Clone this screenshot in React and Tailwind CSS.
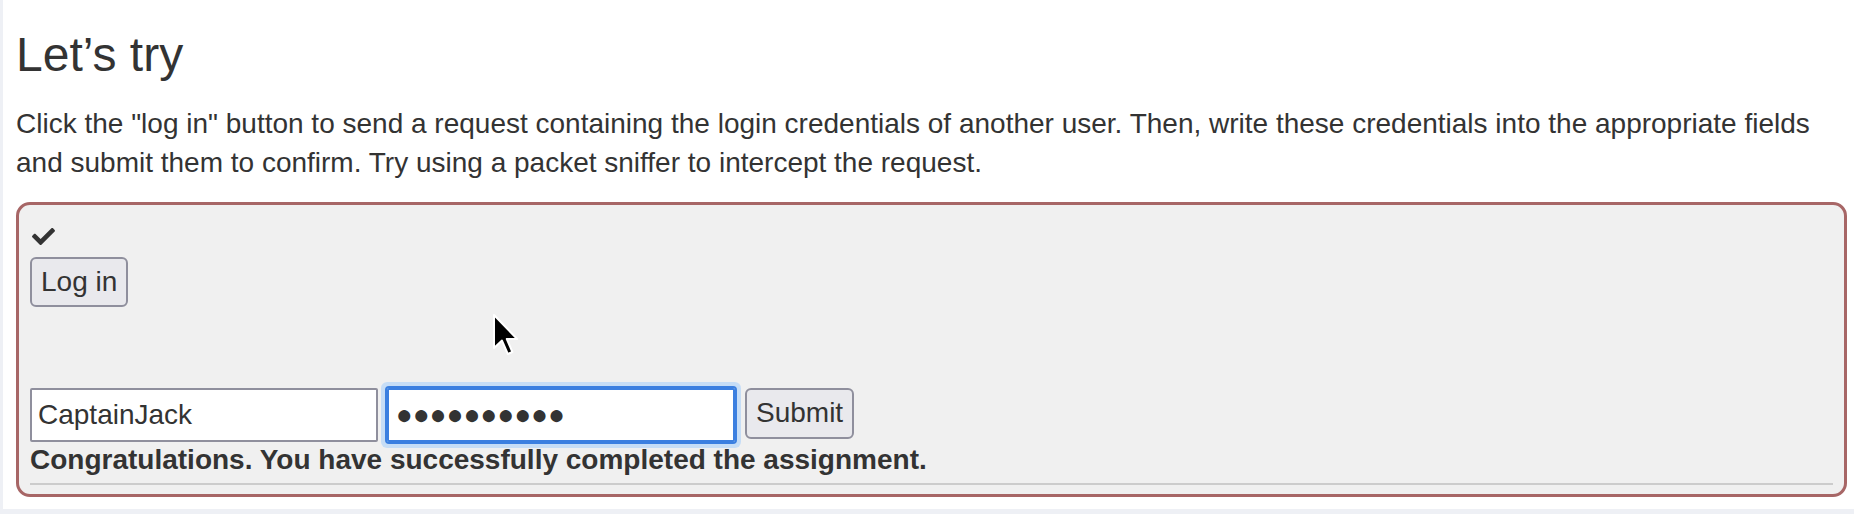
import React from "react";
import { FaCheck } from "react-icons/fa";

export default function App() {
  return (
    <div className="w-[1854px] h-[514px] bg-[#eef0f5] pl-[3px] overflow-hidden font-['Liberation_Sans',Arial,sans-serif] text-[#333333]">
      <div className="relative bg-white h-[509px] pl-[13px] pr-[7px] pt-[29px]">
        <h3 className="text-[48px] leading-[1.1] font-normal">Let’s try</h3>
        <p className="mt-[22px] text-[28px] leading-[39px]">
          Click the "log in" button to send a request containing the login credentials of another user. Then, write these credentials into the appropriate fields and submit them to confirm. Try using a packet sniffer to intercept the request.
        </p>
        <div className="mt-[20px] border-[3px] border-[#a76666] rounded-[14px] bg-[#f0f0f0] px-[11px] pt-[20px] pb-[9px]">
          <FaCheck size={23} className="block ml-[2px] w-[23px] h-[23px] text-[#333333]" />
          <button className="mt-[9px] flex items-center justify-center h-[50px] px-[9px] border-2 border-[#8f8f9d] rounded-[6px] bg-[#e9e9ed] text-[28px] leading-[32px] text-[#333333]">
            Log in
          </button>
          <div className="mt-[81px] flex items-start">
            <input
              type="text"
              readOnly
              value="CaptainJack"
              className="w-[348px] h-[54px] border-2 border-[#8f8f9d] rounded-[2px] bg-white px-[6px] text-[28px] text-[#333333] outline-none"
            />
            <input
              type="text"
              readOnly
              value="●●●●●●●●●●"
              className="ml-[9px] w-[348px] h-[54px] border-2 border-[#3b7fe0] rounded-[2px] bg-white px-[7px] text-[28px] text-[#333333] outline-2 outline-solid outline-[#3b7fe0] shadow-[0_0_0_6px_#c6ddf6]"
            />
            <button className="ml-[10px] flex items-center justify-center h-[51px] px-[9px] border-2 border-[#8f8f9d] rounded-[6px] bg-[#e9e9ed] text-[28px] leading-[32px] text-[#333333]">
              Submit
            </button>
          </div>
          <div className="mt-[4px] font-bold text-[28px] leading-[28px]">
            Congratulations. You have successfully completed the assignment.
          </div>
          <div className="mt-[9px] h-[2px] bg-[#cccccc]" />
        </div>
        <svg
          className="absolute left-[489px] top-[313px]"
          width="28"
          height="46"
          viewBox="0 0 14 23"
        >
          <path
            d="M1 1 L1 17.5 L5 13.8 L7.9 20.5 L10.2 19.5 L7.4 13 L12.6 13 Z"
            fill="#000"
            stroke="#fff"
            strokeWidth="1"
            strokeLinejoin="round"
          />
        </svg>
      </div>
    </div>
  );
}
